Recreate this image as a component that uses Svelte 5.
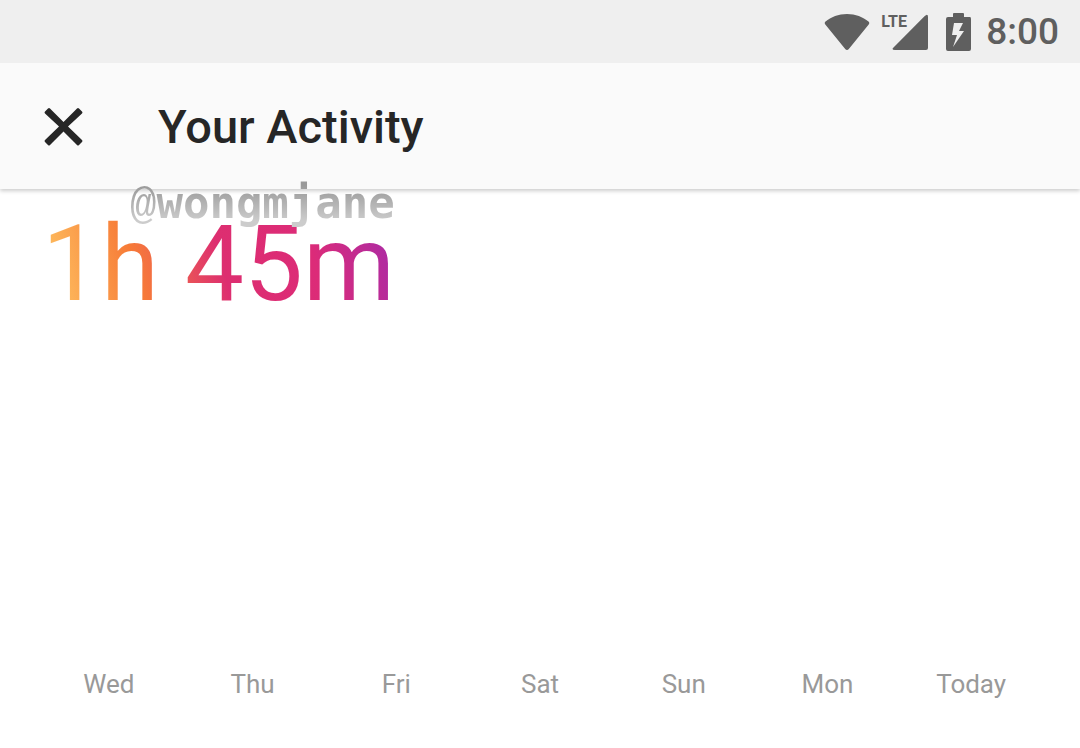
<script lang="ts">
	const title = 'Your Activity';
	const total = '1h 45m';
	const days = ['Wed', 'Thu', 'Fri', 'Sat', 'Sun', 'Mon', 'Today'];

	function close() {
		history.back();
	}
</script>

<div class="screen">
	<!-- STATUS BAR -->
	<div class="status-bar">
		<svg class="wifi" viewBox="0 0 46 36" aria-hidden="true">
			<path d="M1.5 7.5C7 3 14.5 0 23 0s16 3 21.5 7.5c1 .9 1 1.8.2 2.9L24.8 34.9c-1 1.3-2.6 1.3-3.6 0L1.3 10.4c-.8-1.1-.8-2 .2-2.9Z" />
		</svg>

		<div class="signal">
			<svg viewBox="0 0 48 36" aria-hidden="true">
				<path d="M47 3v31q0 2-2 2H14q-4 0-1.5-2.5L43.5 2.2Q47-1.2 47 3Z" />
			</svg>
			<span class="network">LTE</span>
		</div>

		<svg class="battery" viewBox="0 0 26 38" aria-hidden="true">
			<path
				fill-rule="evenodd"
				d="M8 0h9q1 0 1 1v3h6q1 0 1 2v30q0 2-2 2H2q-2 0-2-2V6q0-2 2-2h5V1q0-1 1-1ZM8 10 6 22h5L7 34l11-16h-5l4-8Z"
			/>
		</svg>

		<time class="clock">8:00</time>
	</div>

	<!-- HEADER -->
	<header class="header">
		<button class="close" aria-label="Close" onclick={close}>
			<svg viewBox="0 0 42 42" aria-hidden="true">
				<path
					d="M3 5.5 6 2.5Q7 1.5 8 2.5L21.500 16 35 2.500Q36 1.500 37 2.500L40 5.500Q41 6.500 40 7.500L26 20.500 40 34Q41 35 40 36L37 39Q36 40 35 39L21.500 25.500 8 39Q7 40 6 39L3 36Q2 35 3 34L17 20.500 3 7.500Q2 6.500 3 5.500Z"
				/>
			</svg>
		</button>
		<h1 class="title">{title}</h1>
	</header>

	<!-- ACTIVITY -->
	<main class="activity">
		<span class="handle"><span class="at">@</span>wongmjane</span>
		<p class="total">{total}</p>

		<ul class="days">
			{#each days as day}
				<li>{day}</li>
			{/each}
		</ul>
	</main>
</div>

<style>
	:global(body) {
		margin: 0;
		background: #fff;
	}

	.screen {
		min-height: 100vh;
		display: flex;
		flex-direction: column;
		box-sizing: border-box;
		font-family: Roboto, sans-serif;
		color: #262626;
	}

	/* STATUS BAR */
	.status-bar {
		height: 63px;
		padding: 0 21px;
		display: flex;
		align-items: center;
		justify-content: flex-end;
		box-sizing: border-box;
		background: #efefef;
		color: #5f5f5f;
	}

	.status-bar svg {
		display: block;
		fill: currentColor;
	}

	.wifi {
		width: 46px;
		height: 36px;
	}

	.signal {
		position: relative;
		width: 48px;
		margin: 0 17px 0 11px;
	}

	.network {
		position: absolute;
		top: -2px;
		left: 0;
		font-size: 16px;
		font-weight: 700;
		line-height: 20px;
	}

	.battery {
		width: 26px;
		height: 38px;
		margin-right: 14px;
	}

	.clock {
		font-size: 37px;
		font-weight: 500;
		line-height: 44px;
	}

	/* HEADER */
	.header {
		height: 126px;
		padding: 2px 42px 0;
		display: flex;
		align-items: center;
		gap: 74px;
		box-sizing: border-box;
		background: #fafafa;
		box-shadow: 0 2px 4px rgba(0, 0, 0, 0.2);
		clip-path: inset(0 0 -8px);
	}

	.close {
		padding: 0;
		border: 0;
		background: none;
		color: inherit;
		cursor: pointer;
	}

	.close svg {
		display: block;
		width: 42px;
		height: 42px;
		fill: currentColor;
	}

	.title {
		margin: 0;
		font-size: 47px;
		font-weight: 500;
		line-height: 56px;
	}

	/* ACTIVITY */
	.activity {
		position: relative;
		flex: 1;
		display: flex;
		flex-direction: column;
		padding: 15px 37px 48px;
	}

	.handle {
		position: absolute;
		top: -12px;
		left: 130px;
		font-family: 'DejaVu Sans Mono', monospace;
		font-size: 44px;
		font-weight: 700;
		line-height: 52px;
		background: linear-gradient(#999 15%, #ccc 80%);
		background-clip: text;
		color: transparent;
	}

	.at {
		font-family: 'Liberation Mono', monospace;
		font-weight: 400;
	}

	.total {
		align-self: flex-start;
		margin: 0 5px;
		font-size: 105px;
		line-height: 122px;
		background: linear-gradient(75deg, #fdb65a 8%, #f77b37 28%, #f0684a 35%, #dd2e70 51%, #dc2b78 75%, #a42bac 100%);
		background-clip: text;
		color: transparent;
	}

	.days {
		margin: auto 0 0;
		padding: 0;
		display: grid;
		grid-template-columns: repeat(7, 1fr);
		list-style: none;
		font-size: 26px;
		line-height: 32px;
		text-align: center;
		color: #999;
	}
</style>
